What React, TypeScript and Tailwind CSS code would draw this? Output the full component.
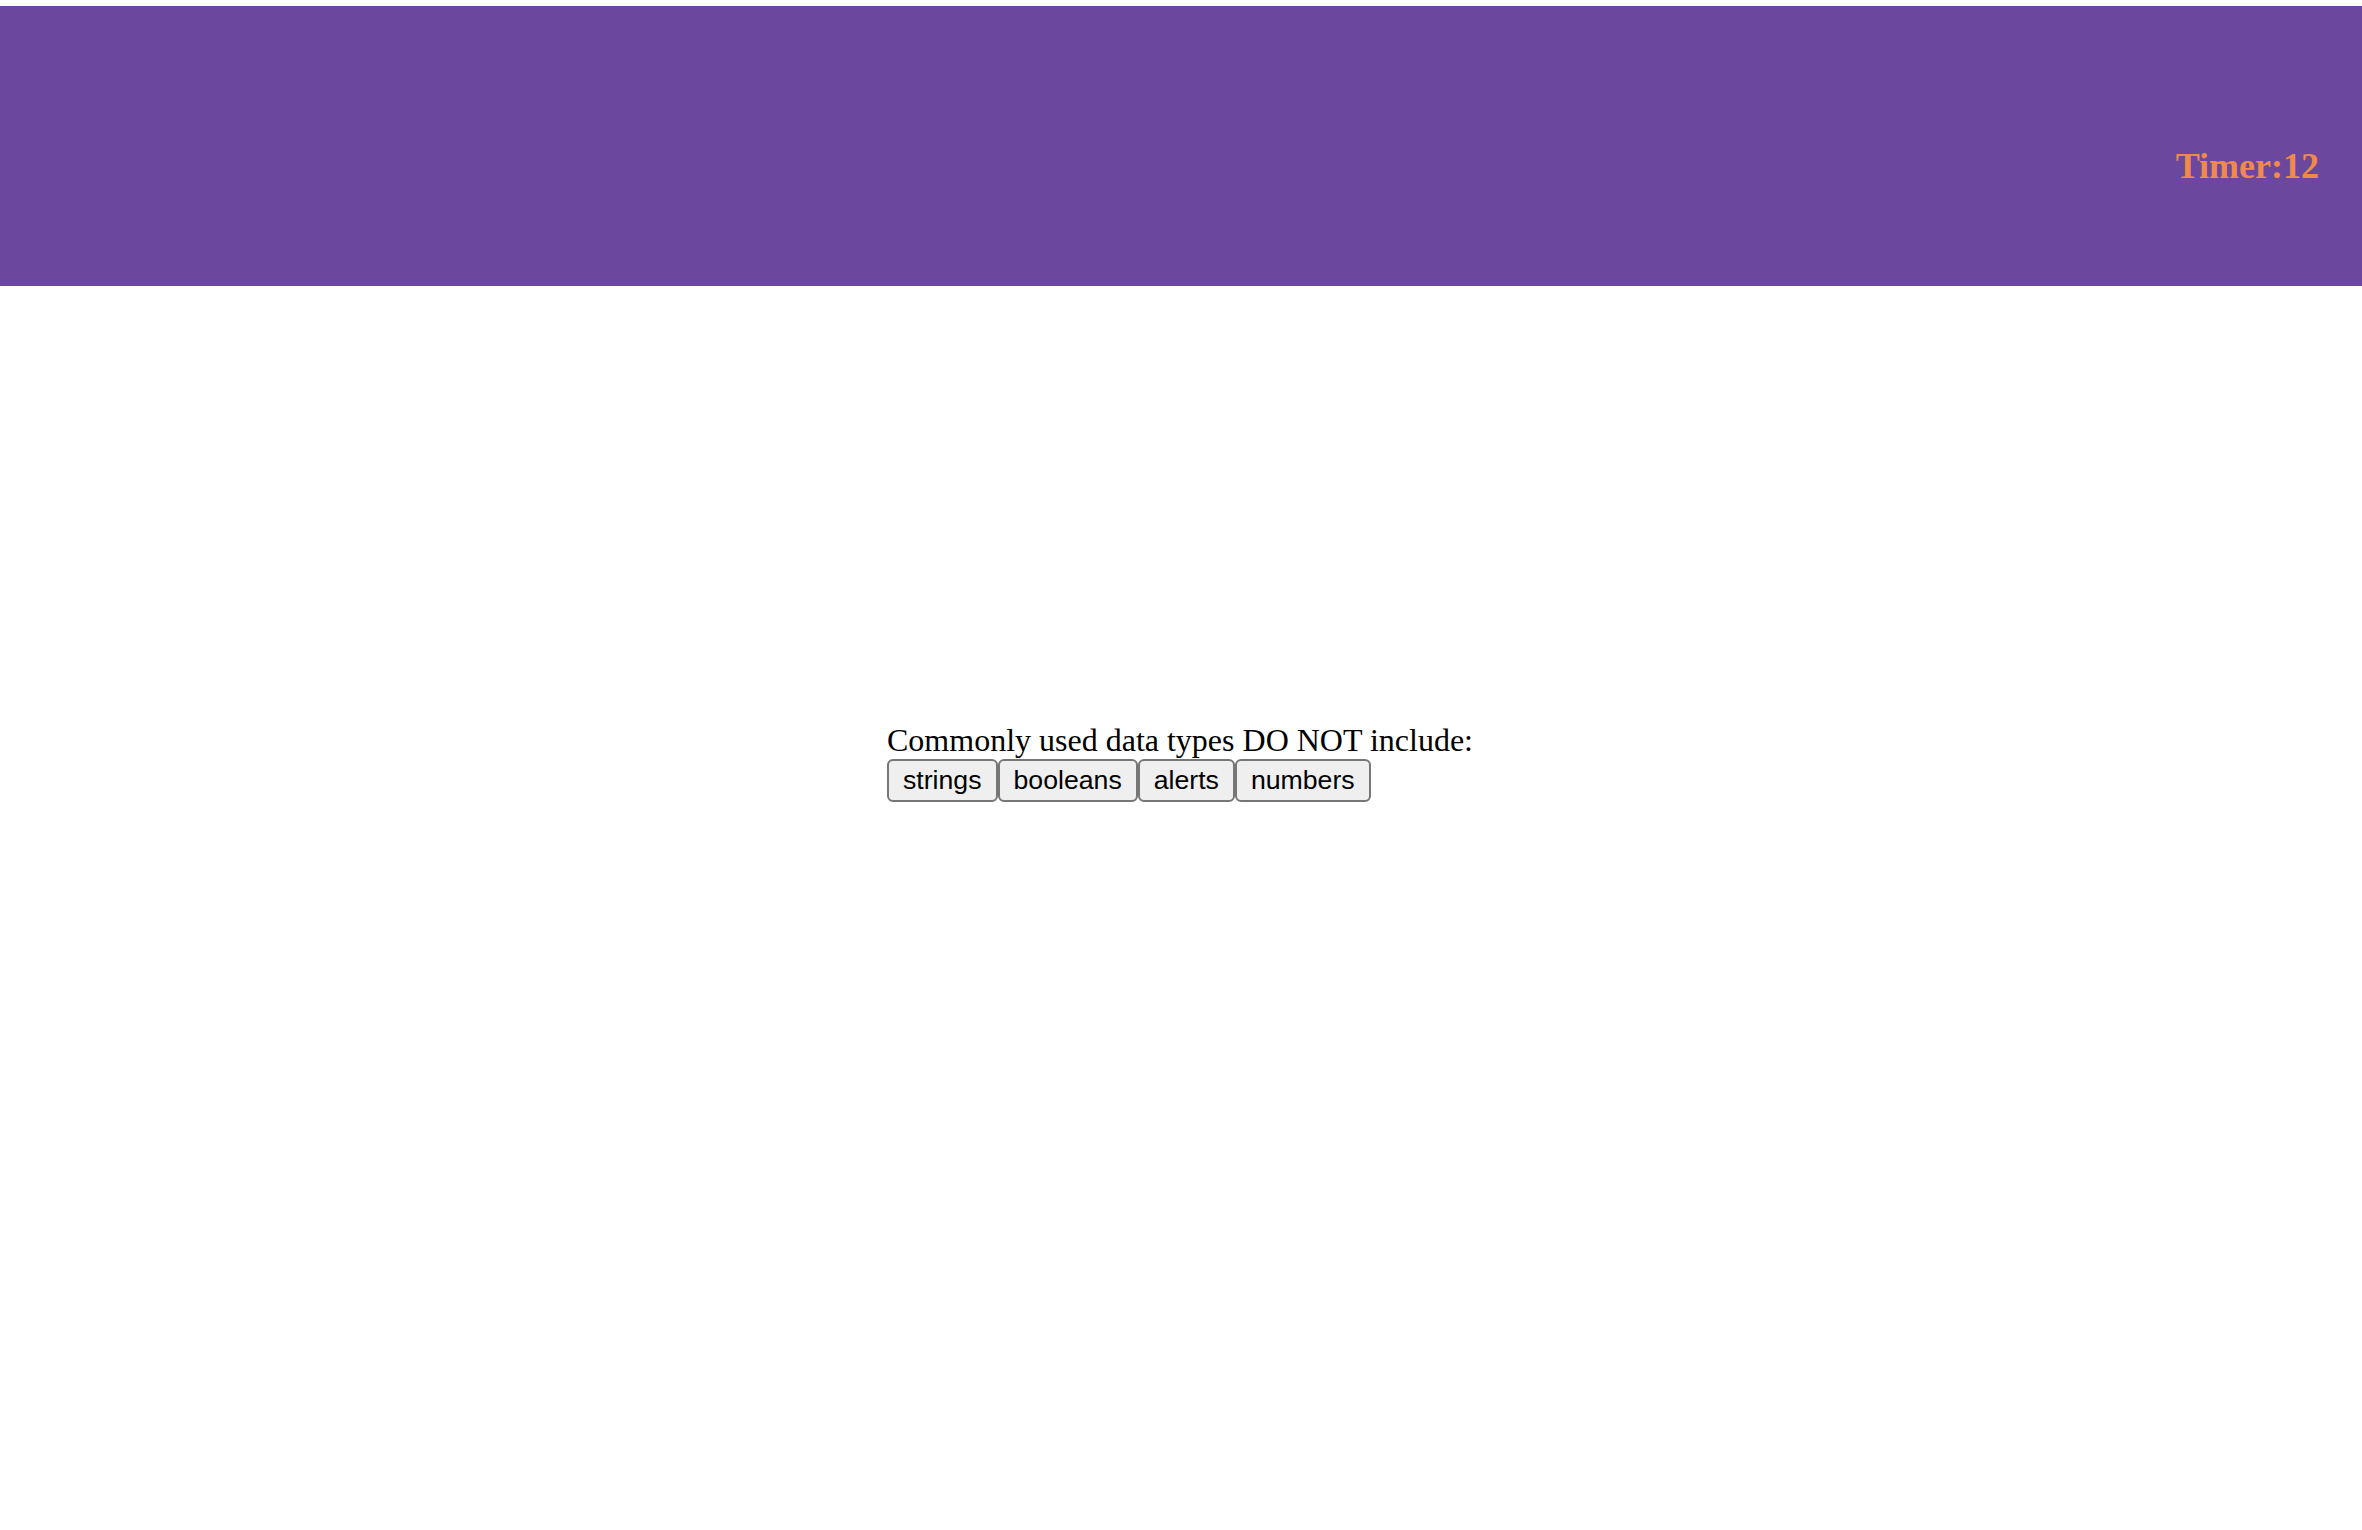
export default function App() {
  return (
    <div className="min-h-[1530px] w-full bg-white pt-[6px]">
      <header className="flex h-[280px] w-full items-start justify-end bg-[#6c479e] pr-[43px] pt-[140px]">
        <h2 className="m-0 text-[36px] font-bold leading-[40px] text-[#f08a4c] [font-family:'Liberation_Serif',serif]">
          Timer:12
        </h2>
      </header>
      <main className="pl-[887px] pt-[436px]">
        <p className="m-0 text-[32px] leading-[37px] text-black [font-family:'Liberation_Serif',serif]">
          Commonly used data types DO NOT include:
        </p>
        <div className="flex">
          {["strings", "booleans", "alerts", "numbers"].map((b) => (
            <button
              key={b}
              className="h-[43px] rounded-[6px] border-2 border-[#767676] bg-[#efefef] px-[14px] text-[26.67px] leading-[31px] text-black [font-family:'Liberation_Sans',Arial,sans-serif]"
            >
              {b}
            </button>
          ))}
        </div>
      </main>
    </div>
  );
}
